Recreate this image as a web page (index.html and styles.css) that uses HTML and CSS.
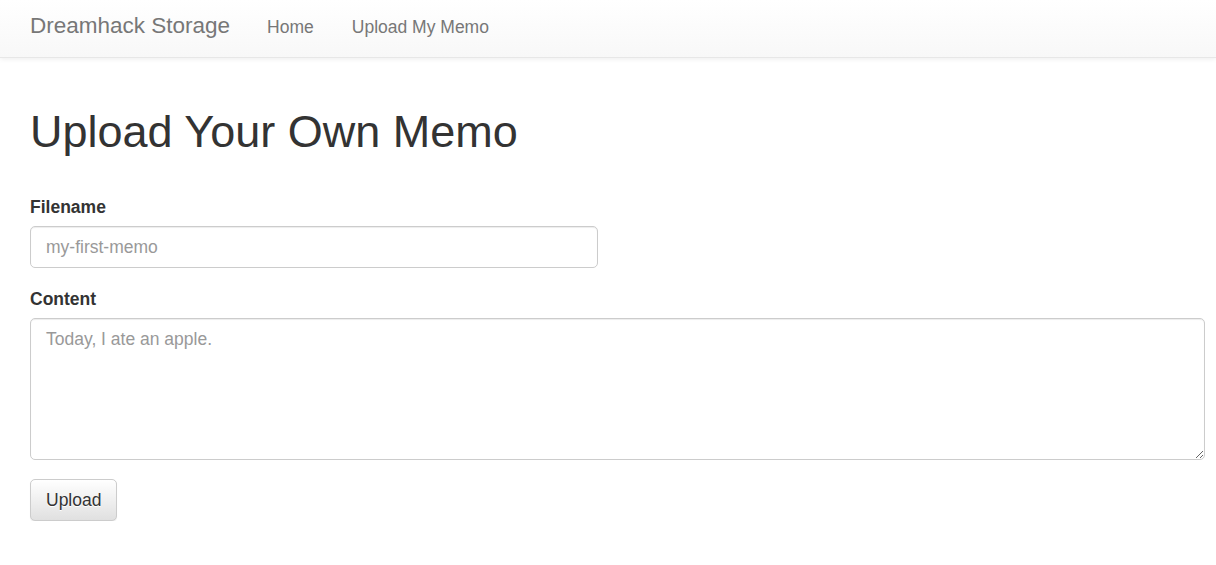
FILE: index.html
```html
<!DOCTYPE html>
<html lang="en">
<head>
  <meta charset="UTF-8">
  <meta name="viewport" content="width=device-width, initial-scale=1.0">
  <title>Dreamhack Storage</title>
  <link rel="stylesheet" href="styles.css">
</head>
<body>

  <nav class="navbar">
    <a class="brand" href="#">Dreamhack Storage</a>
    <a class="nav-link" href="#">Home</a>
    <a class="nav-link" href="#">Upload My Memo</a>
  </nav>

  <div class="container">
    <h1 class="title">Upload Your Own Memo</h1>

    <form class="memo-form">
      <div class="form-group">
        <label class="form-label" for="filename">Filename</label>
        <input class="form-control input-name" type="text" id="filename" placeholder="my-first-memo">
      </div>
      <div class="form-group">
        <label class="form-label" for="content">Content</label>
        <textarea class="form-control input-content" id="content" placeholder="Today, I ate an apple."></textarea>
      </div>
      <button class="btn" type="button">Upload</button>
    </form>
  </div>

</body>
</html>
```

FILE: styles.css
```css
* {
  margin: 0;
  padding: 0;
  box-sizing: border-box;
}

body {
  font-family: "Liberation Sans", Arial, sans-serif;
  font-size: 17.5px;
  line-height: 25px;
  color: #333;
  background: #fff;
}

.navbar {
  display: flex;
  align-items: baseline;
  height: 58px;
  padding-left: 30px;
  background-image: linear-gradient(to bottom, #fff 0, #f8f8f8 100%);
  border-bottom: 1px solid #e7e7e7;
  box-shadow: 0 1px 5px rgba(0, 0, 0, .075);
}

.navbar a {
  color: #777;
  text-decoration: none;
}

.brand {
  font-size: 22.5px;
  line-height: 25px;
  padding-top: 13px;
  margin-right: 37px;
}

.nav-link {
  margin-right: 38px;
}

.container {
  padding: 0 11px 0 30px;
}

.title {
  font-size: 45px;
  font-weight: 500;
  line-height: 50px;
  margin-top: 49px;
  margin-bottom: 38px;
}

.form-group {
  margin-bottom: 19px;
}

.form-label {
  display: block;
  font-weight: bold;
  margin-bottom: 6px;
}

.form-control {
  display: block;
  font-family: inherit;
  font-size: 17.5px;
  line-height: 25px;
  color: #555;
  padding: 7.5px 15px;
  border: 1px solid #ccc;
  border-radius: 5px;
  box-shadow: inset 0 1px 1px rgba(0, 0, 0, .075);
  background: #fff;
}

.form-control::placeholder {
  color: #999;
}

.input-name {
  width: 568px;
  height: 42px;
}

.input-content {
  width: 100%;
  height: 142px;
}

.btn {
  font-family: inherit;
  font-size: 17.5px;
  line-height: 25px;
  color: #333;
  padding: 8px 15px 7px;
  border: 1px solid #ccc;
  border-radius: 5px;
  background-image: linear-gradient(to bottom, #fff 0, #e0e0e0 100%);
  text-shadow: 0 1px 0 #fff;
  box-shadow: inset 0 1px 0 rgba(255, 255, 255, .15), 0 1px 1px rgba(0, 0, 0, .075);
  cursor: pointer;
}
```
